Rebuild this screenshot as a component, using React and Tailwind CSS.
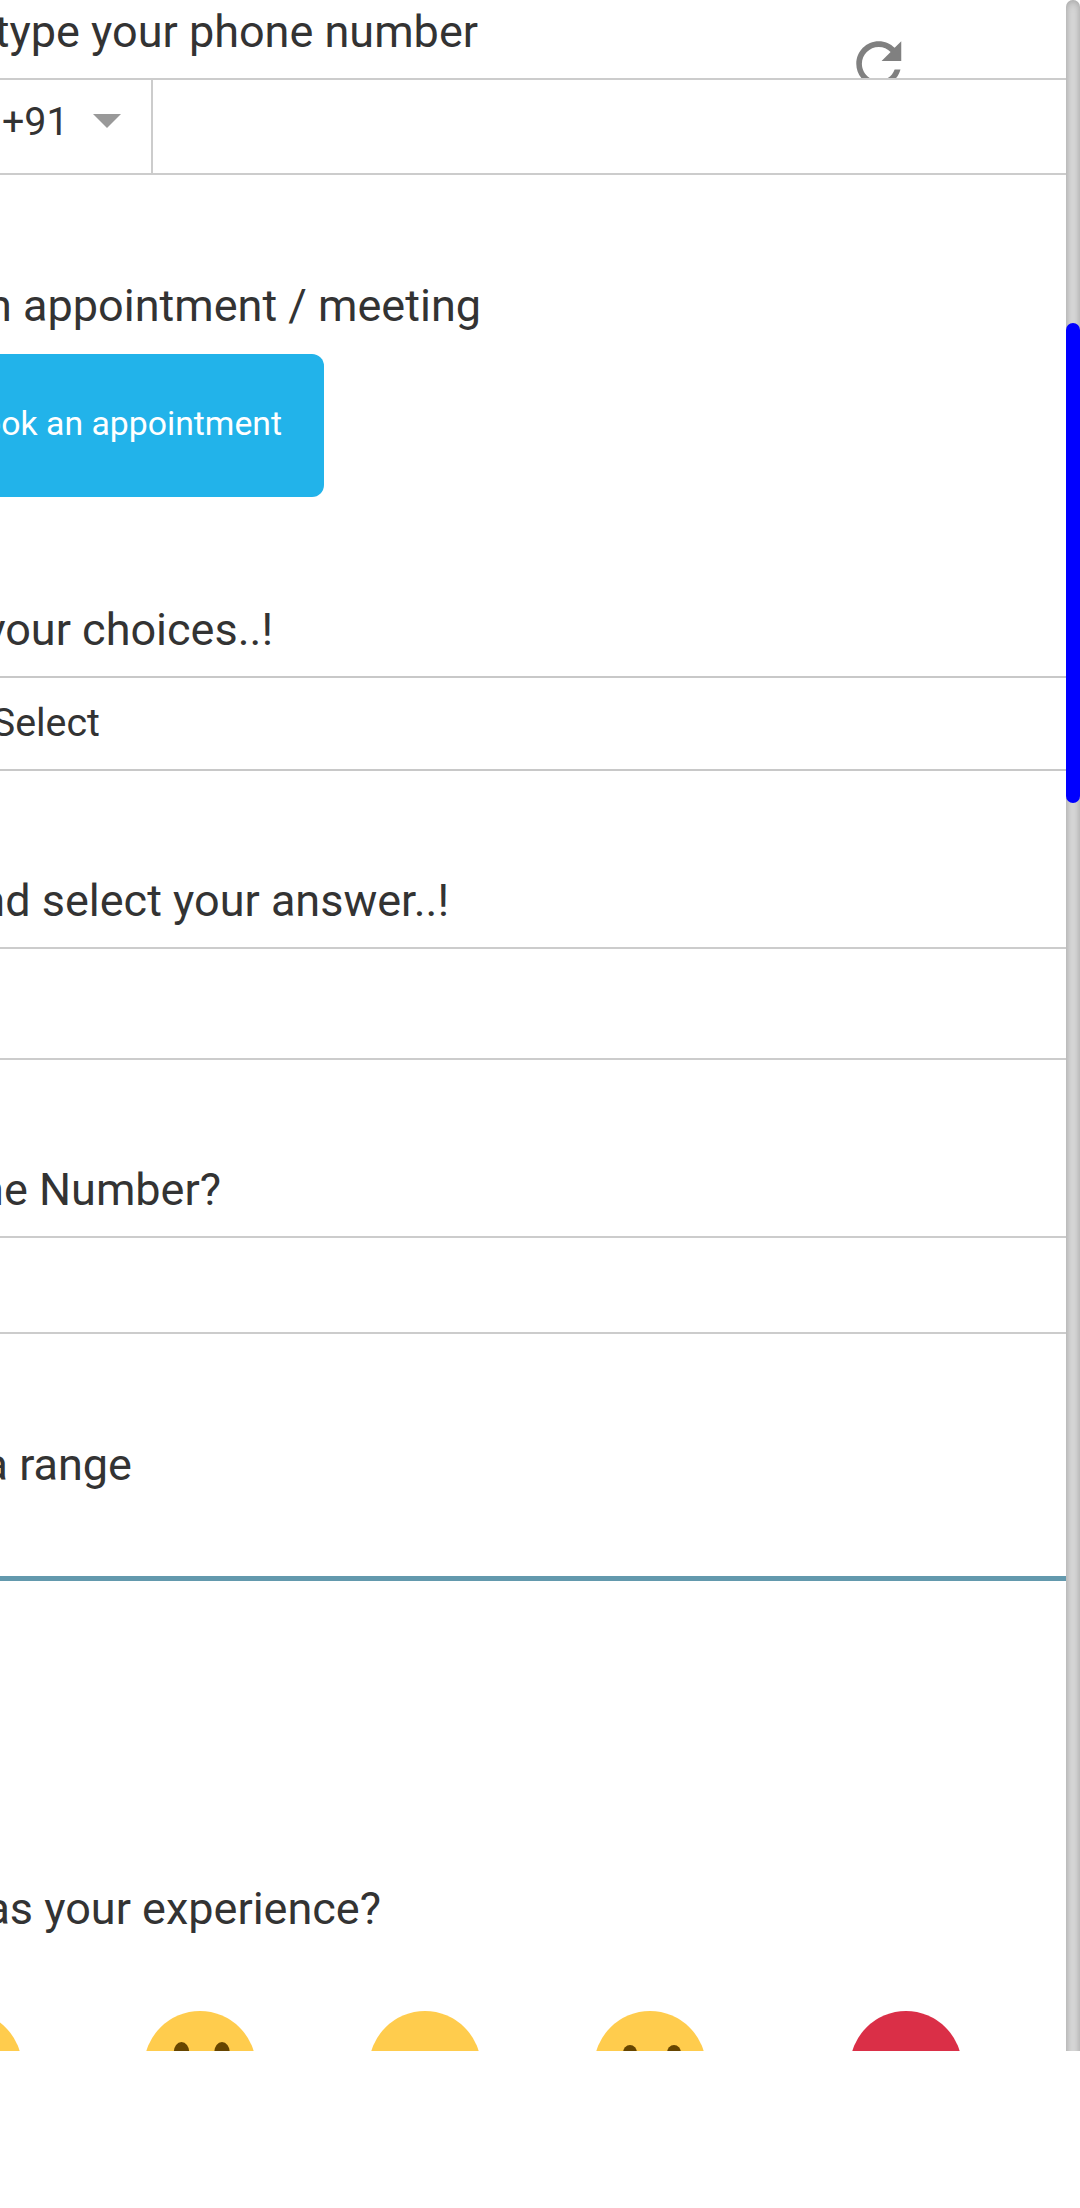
import React from "react";

function Label({ className = "", children }) {
  return (
    <div className={"flex h-[52px] justify-end whitespace-pre text-[45px] leading-[52px] text-[#333333] " + className}>
      <span>{children}</span>
    </div>
  );
}

function Emoji({ fill, className = "", children }) {
  return (
    <svg viewBox="-56 -56 112 112" className={"h-[112px] w-[112px] shrink-0 " + className}>
      <circle r="56" fill={fill} />
      {children}
    </svg>
  );
}

export default function App() {
  return (
    <div className="h-[2208px] w-[1080px] overflow-hidden bg-white font-['Roboto',sans-serif]">
      <div className="flex h-[2051px] overflow-hidden">
        <main className="relative w-[1066px] shrink-0 overflow-hidden">
          <div className="h-[78px] overflow-hidden pt-[6px]">
            <Label className="w-[478px]">type your phone number</Label>
          </div>
          <div className="absolute left-[844px] top-0 h-[78px] w-[70px] overflow-hidden">
            <svg viewBox="0 0 24 24" className="mt-[30px] ml-[0.75px] h-[67.5px] w-[67.5px] fill-[#808080]">
              <path d="M17.65 6.35C16.2 4.9 14.21 4 12 4c-4.42 0-7.99 3.58-7.99 8s3.57 8 7.99 8c3.73 0 6.84-2.55 7.73-6h-2.08c-.82 2.33-3.04 4-5.65 4-3.31 0-6-2.69-6-6s2.69-6 6-6c1.66 0 3.14.69 4.22 1.78L13 11h7V4l-2.35 2.35z" />
            </svg>
          </div>

          <div className="flex h-[97px] border-y-2 border-[#cccccc]">
            <div className="flex w-[153px] items-start border-r-2 border-[#cccccc] text-[39.4px] leading-[46px] text-[#333333]">
              <span className="mt-[19px] w-[93px] pl-[2px]">+91</span>
              <svg viewBox="0 0 28 14" className="mt-[34px] h-[14px] w-[28px] fill-[#999999]">
                <path d="M0 0h28L14 14z" />
              </svg>
            </div>
          </div>

          <Label className="mt-[105px] w-[481px]">n appointment / meeting</Label>
          <button className="mt-[22px] flex h-[143px] w-[324px] items-center justify-end rounded-r-[12px] bg-[#22b3ea] pr-[42px] pb-[2px] text-[33.75px] whitespace-nowrap text-white">
            ook an appointment
          </button>

          <Label className="mt-[107px] w-[273px]">your choices..!</Label>
          <div className="mt-[20px] h-[95px] border-y-2 border-[#c8c8c8]">
            <div className="mt-[22px] flex w-[100px] justify-end text-[39.4px] leading-[46px] text-[#333333]">Select</div>
          </div>

          <Label className="mt-[104px] w-[449px]">nd select your answer..!</Label>
          <div className="mt-[20px] h-[113px] border-y-2 border-[#cccccc]" />

          <Label className="mt-[104px] w-[221px]">ne Number?</Label>
          <div className="mt-[20px] h-[98px] border-y-2 border-[#cccccc]" />

          <Label className="mt-[105px] w-[132px]">a range</Label>
          <div className="mt-[85px] h-[5px] bg-[#6399ad]" />

          <Label className="mt-[302px] w-[381px]">as your experience?</Label>
          <div className="mt-[76px] -ml-[90px] flex">
            <Emoji fill="#ffcc4d" />
            <Emoji fill="#ffcc4d" className="ml-[122px]">
              <ellipse cx="-18.5" cy="-14.5" rx="7.7" ry="10.5" fill="#664500" />
              <ellipse cx="22" cy="-14.5" rx="7.7" ry="10.5" fill="#664500" />
            </Emoji>
            <Emoji fill="#ffcc4d" className="ml-[113px]" />
            <Emoji fill="#ffcc4d" className="ml-[113px]">
              <ellipse cx="-20" cy="-14" rx="7" ry="8" fill="#664500" />
              <ellipse cx="24" cy="-14" rx="7" ry="8" fill="#664500" />
            </Emoji>
            <Emoji fill="#da2f47" className="ml-[143.5px]" />
          </div>
        </main>

        <div className="h-[2200px] w-[14px] shrink-0 rounded-[7px] bg-[#dadada] pt-[323px] shadow-[inset_0_0_9px_#9a9a9a]">
          <div className="h-[480px] rounded-[7px] bg-[#0000ff]" />
        </div>
      </div>
    </div>
  );
}
